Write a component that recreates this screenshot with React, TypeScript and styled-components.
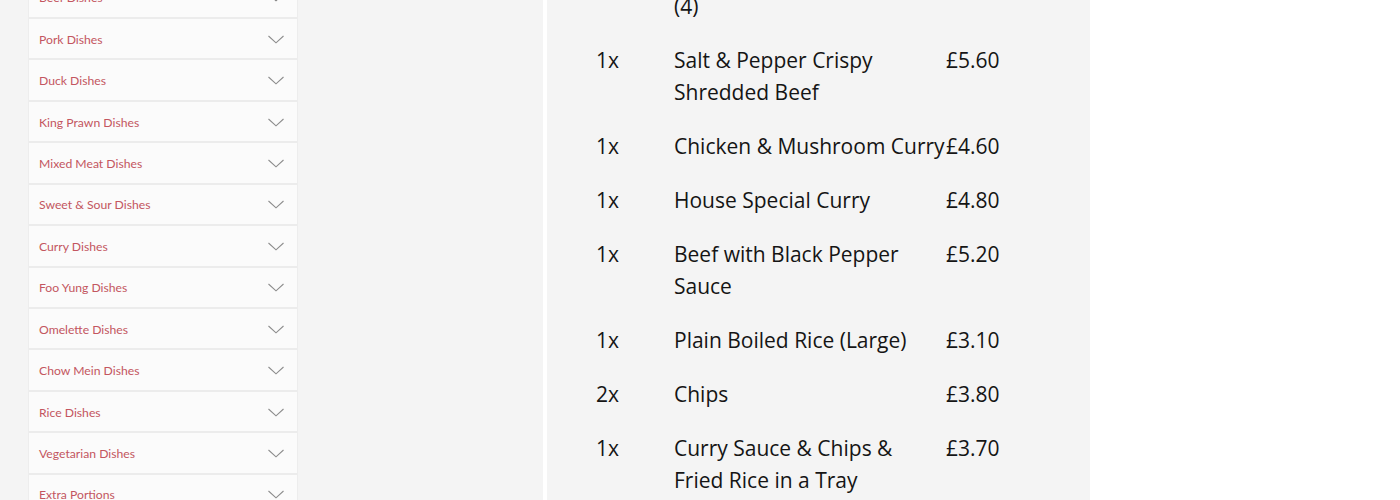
import React from "react";
import styled, { createGlobalStyle } from "styled-components";

const Global = createGlobalStyle`
  html, body { margin: 0; padding: 0; background: #ffffff; }
  body { overflow: hidden; }
  * { box-sizing: border-box; }
`;

const Viewport = styled.div`
  width: 1400px;
  height: 500px;
  overflow: hidden;
  background: #ffffff;
`;

/* simulated scroll position of the page */
const Page = styled.div<{ $scroll: number }>`
  margin-top: ${(p) => -p.$scroll}px;
  display: flex;
  align-items: stretch;
  gap: 4px;
  min-height: 900px;
`;

const Sidebar = styled.aside`
  width: 543px;
  flex: none;
  background: #f4f4f4;
  padding: 11.75px 0 40px 28px;
`;

const CategoryList = styled.ul`
  list-style: none;
  margin: 0;
  padding: 0;
  width: 270px;
`;

const CategoryItem = styled.li`
  height: 41.45px;
  display: flex;
  align-items: center;
  justify-content: space-between;
  padding: 1px 13px 0 10px;
  background: #fbfbfb;
  border: 1px solid #ededed;
  border-top: none;
  border-bottom: 2px solid #ececec;
  font-family: Lato, "Noto Sans", sans-serif;
  font-size: 12.2px;
  color: #c35660;
  cursor: pointer;
`;

const Chevron = () => (
  <svg width="16" height="9" viewBox="0 0 16 9" fill="none">
    <polyline points="0.5,1 8,7.8 15.5,1" stroke="#8c8c8c" strokeWidth="1.1" />
  </svg>
);

const OrderPanel = styled.section`
  width: 543px;
  flex: none;
  background: #f4f4f4;
  padding: 93px 40px 40px 49px;
  font-family: "Open Sans", sans-serif;
  font-size: 21px;
  line-height: 32px;
  color: #151515;
`;

const OrderRow = styled.div`
  display: grid;
  grid-template-columns: 78px 272px auto;
  padding: 11px 0;
`;

const Qty = styled.div``;
const Name = styled.div`
  margin-right: 1px;
`;
const Portion = styled.span`
  display: block;
`;
const Price = styled.div``;

const categories = [
  "Set Meals",
  "Starters",
  "Soups",
  "Chicken Dishes",
  "Beef Dishes",
  "Pork Dishes",
  "Duck Dishes",
  "King Prawn Dishes",
  "Mixed Meat Dishes",
  "Sweet & Sour Dishes",
  "Curry Dishes",
  "Foo Yung Dishes",
  "Omelette Dishes",
  "Chow Mein Dishes",
  "Rice Dishes",
  "Vegetarian Dishes",
  "Extra Portions",
  "Side Orders",
];

type Item = { qty: number; name: string; portion?: string; price: string };

const items: Item[] = [
  { qty: 1, name: "Prawn Crackers", price: "£1.80" },
  { qty: 1, name: "Vegetable Spring Rolls", portion: "(4)", price: "£2.50" },
  { qty: 1, name: "Salt & Pepper Crispy Shredded Beef", price: "£5.60" },
  { qty: 1, name: "Chicken & Mushroom Curry", price: "£4.60" },
  { qty: 1, name: "House Special Curry", price: "£4.80" },
  { qty: 1, name: "Beef with Black Pepper Sauce", price: "£5.20" },
  { qty: 1, name: "Plain Boiled Rice (Large)", price: "£3.10" },
  { qty: 2, name: "Chips", price: "£3.80" },
  { qty: 1, name: "Curry Sauce & Chips & Fried Rice in a Tray", price: "£3.70" },
];

export default function App() {
  return (
    <Viewport>
      <Global />
      <Page $scroll={200}>
        <Sidebar>
          <CategoryList>
            {categories.map((c) => (
              <CategoryItem key={c}>
                <span>{c}</span>
                <Chevron />
              </CategoryItem>
            ))}
          </CategoryList>
        </Sidebar>
        <OrderPanel>
          {items.map((it, i) => (
            <OrderRow key={i}>
              <Qty>{it.qty}x</Qty>
              <Name>
                {it.name}
                {it.portion && <Portion>{it.portion}</Portion>}
              </Name>
              <Price>{it.price}</Price>
            </OrderRow>
          ))}
        </OrderPanel>
      </Page>
    </Viewport>
  );
}
